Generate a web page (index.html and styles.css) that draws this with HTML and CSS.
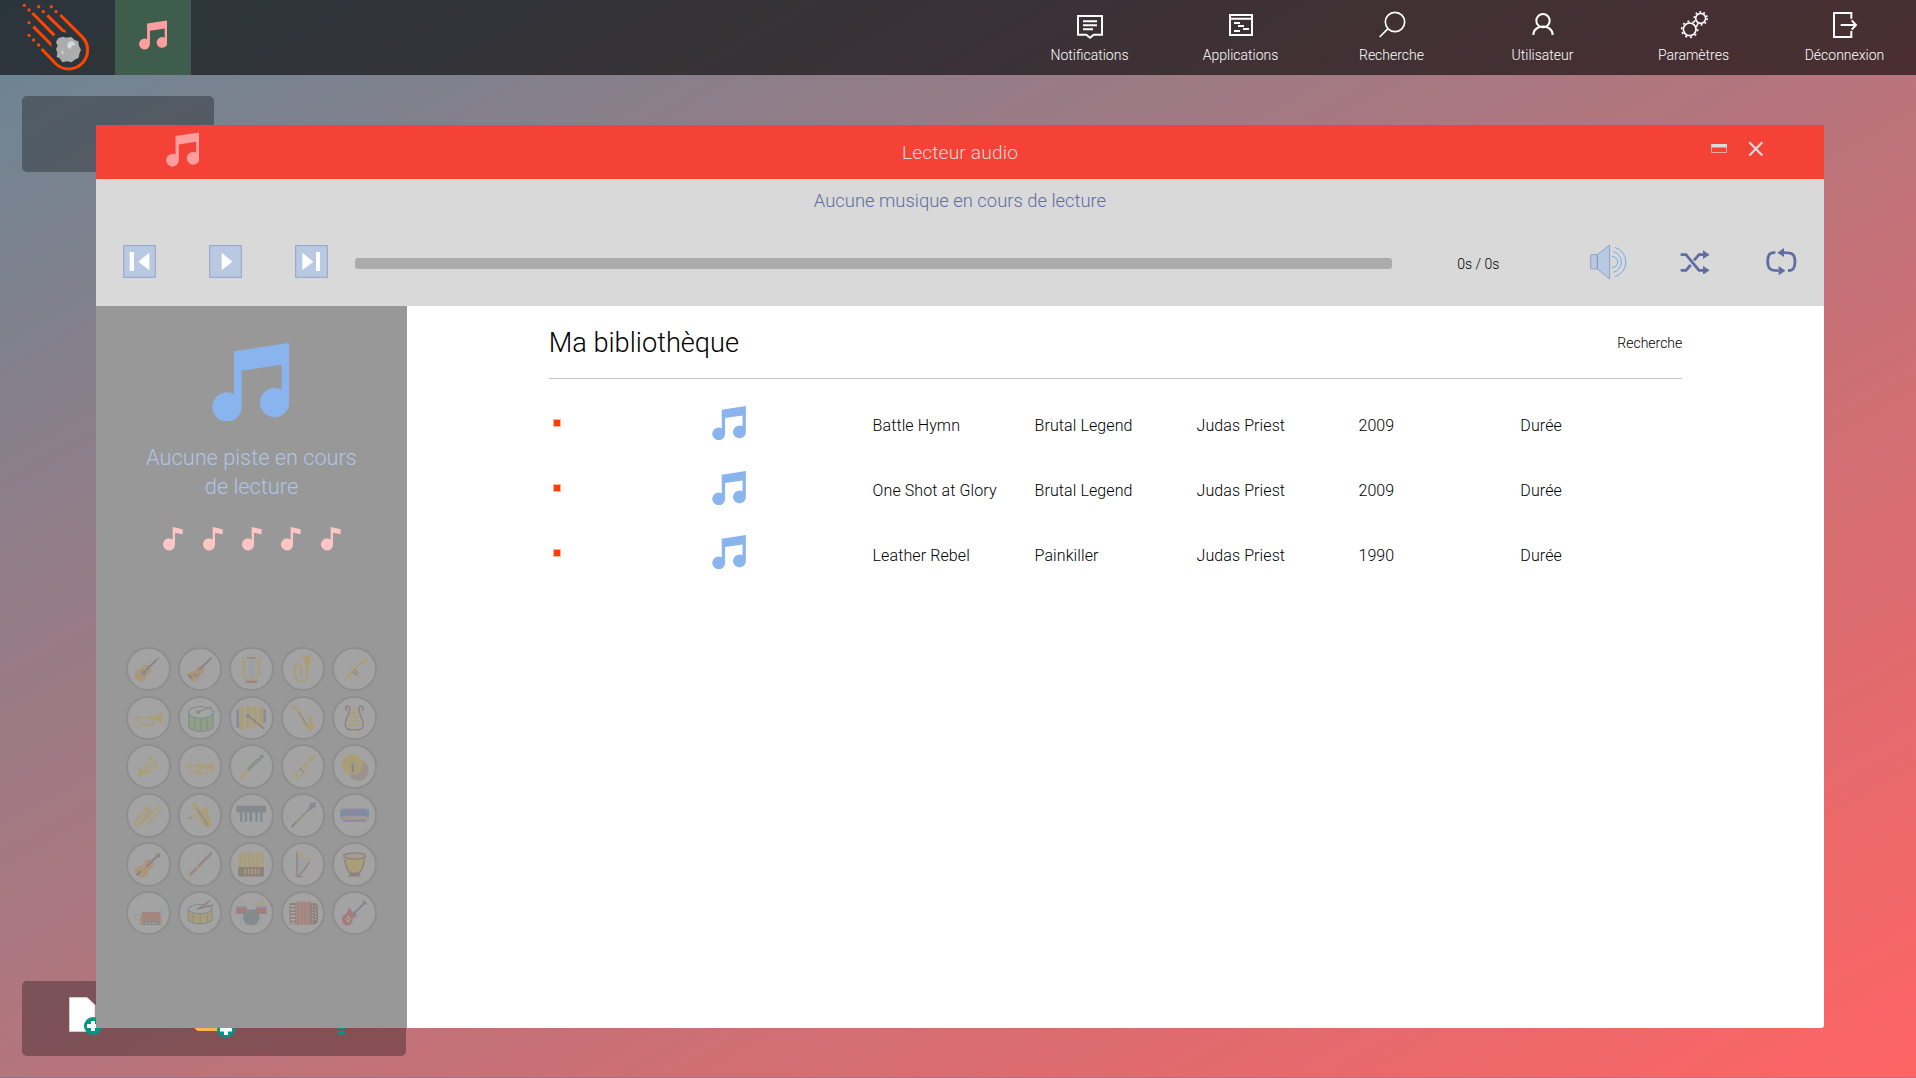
FILE: index.html
```html
<!DOCTYPE html>
<html lang="fr">
<head>
<meta charset="utf-8">
<title>Lecteur audio</title>
<link rel="stylesheet" href="styles.css">
</head>
<body>
<svg class="defs" aria-hidden="true">
  <symbol id="note" viewBox="347 128 232 236"><path d="M413 153L579 128V307A44 44 0 1 1 556 268V193L436 211V320A44 44 0 1 1 413 281Z"/></symbol>
  <symbol id="eighth" viewBox="0 0 60 72"><path d="M29 0L59 7V22L36 17V54A18 18 0 1 1 29 38Z"/></symbol>
</svg>

<header class="topbar">
  <svg class="logo" viewBox="0 0 300 225">
    <g fill="none" stroke="#ff4500" stroke-width="9">
      <path d="M181 45L246 110A56.600 56.600 0 0 1 168 192L125 147"/>
      <path d="M97 39L163 106M100 80L152 132"/>
      <path d="M142 46L190 93"/>
    </g>
    <path fill="#ff4500" d="M185 95L192 87L201 98ZM146 133L152 126L156 142Z"/>
    <g fill="#ff4500"><circle cx="73" cy="16" r="5"/><circle cx="87" cy="30" r="5"/><circle cx="116" cy="20" r="5"/><circle cx="130" cy="35" r="5"/><circle cx="154" cy="20" r="5"/><circle cx="168" cy="35" r="5"/><circle cx="87" cy="68" r="5"/><circle cx="87" cy="106" r="5"/><circle cx="101" cy="120" r="5"/><circle cx="116" cy="135" r="5"/></g>
    <path fill="#acacac" d="M175 114L190 110L198 113L214 111L224 120L235 124L237 138L243 149L238 162L236 173L224 179L215 187L200 184L187 187L179 175L170 171L172 157L168 148L173 137L168 126Z"/>
    <path fill="#d9d9d9" d="M205 144A12 12 0 1 1 226 135C218 134 212 139 211 148ZM191 150A6 6 0 1 0 191 163Q186 157 191 150Z"/>
  </svg>
  <div class="task"><svg class="task-note"><use href="#note"/></svg></div>
  <nav class="menu">
    <a class="menu-item"><svg class="menu-icon" viewBox="0 0 84 84" fill="none" stroke="#fff" stroke-width="6"><path d="M6 15H78V71H53L42 80L31 71H6ZM21 31H63M21 43H63M21 55H51"/></svg>Notifications</a>
    <a class="menu-item"><svg class="menu-icon" viewBox="0 0 84 84" fill="none" stroke="#fff" stroke-width="6"><path d="M9 12H75V72H9ZM9 23H75M21 36H39M33 45H51M48 54H66M21 60H39"/></svg>Applications</a>
    <a class="menu-item"><svg class="menu-icon" viewBox="0 0 84 84" fill="none" stroke="#fff" stroke-width="5"><circle cx="51" cy="33" r="29"/><path d="M30 53L5 78"/></svg>Recherche</a>
    <a class="menu-item"><svg class="menu-icon" viewBox="0 0 84 84" fill="none" stroke="#fff" stroke-width="6"><circle cx="42" cy="29" r="20"/><path d="M13 72C13 38 71 38 71 72"/></svg>Utilisateur</a>
    <a class="menu-item"><svg class="menu-icon" viewBox="0 0 84 84" fill="none" stroke="#fff"><circle cx="29" cy="55" r="19" stroke-width="5"/><circle cx="29" cy="55" r="24" stroke-width="5" stroke-dasharray="6 9.08"/><circle cx="62" cy="22" r="15" stroke-width="5"/><circle cx="62" cy="22" r="19.5" stroke-width="5" stroke-dasharray="5 7.25"/></svg>Paramètres</a>
    <a class="menu-item"><svg class="menu-icon" viewBox="0 0 84 84" fill="none" stroke="#fff" stroke-width="6"><path d="M61 23V6H9V78H61V60M29 42H72M62 28L75 42L62 56"/></svg>Déconnexion</a>
  </nav>
</header>

<main class="desktop">
  <div class="widget"></div>
  <div class="dock">
    <svg viewBox="0 0 384 75">
      <path fill="#fff" stroke="#d9c9cb" d="M47.500 16.500H65L73 24V50.500H47.500Z"/>
      <circle cx="71" cy="45" r="9" fill="#009688"/><path d="M71 40V50M65 45H77" stroke="#fff" stroke-width="4"/>
      <path fill="#ffb74d" d="M172 25H210V50H177Q174 50 172 46Z"/>
      <circle cx="204" cy="48" r="9" fill="#009688"/><path d="M204 42V54M198 48.500H210" stroke="#fff" stroke-width="4"/>
      <path fill="#009688" d="M316 45H323V48H316ZM316 50H323V53.500H316Z"/>
    </svg>
  </div>
</main>

<section class="window">
  <header class="titlebar">
    <svg class="title-note"><use href="#note"/></svg>
    <h1>Lecteur audio</h1>
    <div class="buttons">
      <svg width="16" height="9" viewBox="0 0 16 9"><path fill="none" stroke="#e9aaa6" d="M.5 .5H15.500V8.500H.5Z"/><path fill="#dadada" d="M0 0H16V3.500H0Z"/></svg>
      <svg width="16" height="16" viewBox="0 0 16 16"><path d="M1.300 1.300L14.300 14.500M14.300 1.300L1.300 14.500" stroke="#dadada" stroke-width="2.200"/></svg>
    </div>
  </header>

  <div class="player">
    <p class="now">Aucune musique en cours de lecture</p>
    <div class="controls">
      <svg class="btn" viewBox="0 0 99 99"><rect class="key" x="2" y="2" width="95" height="95"/><path fill="#fff" d="M20 21H33V78H20ZM46 50L79 23V76Z"/></svg>
      <svg class="btn" viewBox="0 0 99 99"><rect class="key" x="2" y="2" width="95" height="95"/><path fill="#fff" d="M38 23L70 50L38 76Z"/></svg>
      <svg class="btn" viewBox="0 0 99 99"><rect class="key" x="2" y="2" width="95" height="95"/><path fill="#fff" d="M22 23L55 50L22 76ZM63 21H75V78H63Z"/></svg>
      <div class="progress"></div>
      <span class="time">0s / 0s</span>
      <svg class="vol" viewBox="0 0 110 108"><path fill="#bac9e2" stroke="#8797bf" stroke-width="2.500" d="M4 32H22V75H4L2 73V34ZM22 32L59 3V105L22 75Z"/><g fill="none" stroke="#72a9ec" stroke-width="3"><path d="M66 37A17 17 0 0 1 66 71M70 23A32 32 0 0 1 70 85M75 10A46 46 0 0 1 75 98"/></g></svg>
      <svg class="shuffle" viewBox="0 0 90 74"><g fill="none" stroke="#5f6da0" stroke-width="8.500"><path d="M2 14H18L57 61H74M2 61H18L32 45M42 31L57 14H74"/></g><path fill="#5f6da0" d="M69 1L89 14L69 27ZM69 48L89 61L69 74Z"/></svg>
      <svg class="repeat" viewBox="0 0 92 82"><g fill="none" stroke="#5f6da0" stroke-width="8.500"><path d="M28 14C12 12 5 20 5 40C5 62 12 68 38 68M66 68C82 68 87 60 87 42C87 18 80 14 52 14"/></g><path fill="#5f6da0" d="M34 14L54 0V27ZM58 68L38 54V82Z"/></svg>
    </div>
  </div>

  <div class="body">
    <aside class="side">
      <svg class="cover"><use href="#note"/></svg>
      <p class="track">Aucune piste en cours<br>de lecture</p>
      <div class="rating"><svg><use href="#eighth"/></svg><svg><use href="#eighth"/></svg><svg><use href="#eighth"/></svg><svg><use href="#eighth"/></svg><svg><use href="#eighth"/></svg></div>
      <div class="instruments">
        <svg viewBox="-59 -59 118 118"><path class="o" d="M-38 12C-36 0 -20 2 -17-5C-12-18 4-14 6-4C14 6 4 14-1 16C-8 22-4 32-18 35C-32 36-42 24-38 12Z"/><circle class="d" cx="-13" cy="11" r="6"/><path class="ld" d="M-11 7L24-27"/><path class="lr" d="M22-25L33-35"/></svg>
        <svg viewBox="-59 -59 118 118"><path class="o" d="M-35 12C-26 2-16 10-12 2C-12-10 6-14 10-4C18 6 6 16-2 16C2 30-14 38-24 34C-38 28-38 18-35 12Z"/><path class="ld" d="M-3 2L33-34M-34 16L-24 26"/><path class="l d1" d="M-20 12L-8 22M-8 18L-2 12"/></svg>
        <svg viewBox="-59 -59 118 118"><path class="ly" stroke-width="6" d="M-20-34C-30-32-26-20-20-24C-16-12-24-2-24 10C-24 34 24 34 24 10C24-2 16-12 20-24C28-20 30-32 20-34"/><path class="lb" d="M-14-33H14"/><path class="ls" d="M-6-30V20M0-30V20M6-30V20"/><path class="r" d="M-17 33H17V40H-17Z"/></svg>
        <svg viewBox="-59 -59 118 118"><path class="y" d="M-12-40H26C18-28 20-20 17-8H7C4-24 2-36-12-40Z"/><path class="ly" stroke-width="6" d="M11-12V22C11 40-24 40-24 18V-4C-24-16-6-16-6-4V18M11-6H22"/></svg>
        <svg viewBox="-59 -59 118 118"><path class="ly" d="M-30 32L22-20M-8 0L14 22M-8 22Q-20 24-10 8L12-6"/><path class="y" d="M20-24Q34-28 36-37L39-22Q28-22 23-16Z"/><path class="l d1" d="M-6 6L8 18M0 0L12 12"/></svg>

        <svg viewBox="-59 -59 118 118"><path class="y" d="M2-8C24-6 34-12 41-20V18C32 10 22 4 2 4Z"/><path class="ly" d="M-42-3H10M-32-2C-32 24-6 20 10 19C22 14 16 2 8 0"/></svg>
        <svg viewBox="-59 -59 118 118"><path class="g" d="M-34-16H38V27Q2 50-34 27Z"/><ellipse class="p" cx="2" cy="-17" rx="36" ry="17"/><path class="l d2" d="M-34-16V27Q2 50 38 27V-16M-16-4V36M2 0V39M20-4V36M-34-17A36 17 0 0 0 38-17A36 17 0 0 0-34-17"/><path class="lr" d="M-5-19L34-34"/><circle class="r" cx="-6" cy="-18" r="6"/></svg>
        <svg viewBox="-59 -59 118 118"><path class="v" d="M-43-27H-36V28H-43ZM35-26H43V10L35 14Z"/><path class="y" d="M-35-34H-21V34H-35ZM-16-34H-2V30H-16ZM3-34H16V26H3ZM21-34H35V22H21Z"/><path class="l brs" d="M-9-7L38 31"/><circle class="d" cx="-10" cy="-7" r="6"/></svg>
        <svg viewBox="-59 -59 118 118"><path class="l ys" stroke-width="8" d="M-36-31L-24-34C-12-30-8-6 8 20C14 36 28 32 28 22"/><path class="y" d="M12-10L28-4L24 2Q24 8 34 18L32 32H12L10 18L19 10Z"/><path class="l d1" d="M-14-18L12 22"/></svg>
        <svg viewBox="-59 -59 118 118"><path class="lb" d="M-21-22C-30-30-22-40-16-34C-8-26-18-12-24 6C-30 28-24 34 0 34C24 34 30 28 24 6C18-12 8-26 16-34C22-40 30-30 23-22"/><path class="ly" d="M-10-28H10M-12-16H12M-16-4H16M-20 8H20M-20 20H20"/></svg>

        <svg viewBox="-59 -59 118 118"><path class="ly" d="M-4-18C18-28 30-6 20 8C10 20-14 16-10-2C-6-14 12-12 12-2C10 8-2 6 0-2M2-32L10-20M-12 10Q-4 18 8 16"/><path class="y" d="M-30 3L-10 14L2 18Q-22 22-28 37Z"/></svg>
        <svg viewBox="-59 -59 118 118"><path class="ly" d="M-40-2H34M-28 0C-28 24-10 21 6 21C26 21 24 4 12 0"/><path class="y" d="M10-6Q30-4 40-14V18Q28 6 10 6Z"/><path class="ly" d="M-12-8V22M-4-8V22M4-8V22"/></svg>
        <svg viewBox="-59 -59 118 118"><path class="l ys" stroke-width="9" d="M-32 34L-6 8"/><path class="l d2" stroke-width="9" d="M-10 10L35-32"/><path class="l ys" stroke-dasharray="5 5" d="M-6 6L31-28"/></svg>
        <svg viewBox="-59 -59 118 118"><path class="ly" d="M-34 34L24-24M-18 16C-24 32-10 36-4 26L10 12C16 2 6-2 0 2"/><path class="y" d="M16-22Q28-24 34-38L38-28Q24-16 20-14Z"/><path class="l d1" d="M-10 6L2 18"/></svg>
        <svg viewBox="-59 -59 118 118"><circle class="br" opacity=".5" cx="12" cy="12" r="30"/><circle class="y" cx="-5" cy="-5" r="31"/><circle class="g" opacity=".5" cx="-5" cy="-5" r="12"/><path class="ld" d="M-5-6V18"/></svg>

        <svg viewBox="-59 -59 118 118"><path class="ly" d="M-40 20L-8-14M-40 20C-40 36-30 30-24 26L28-24C40-28 40-18 34-14L-4 26M-30 24L6-10M-12-2L4 14"/><path class="y" d="M-12-12L-6-31L12-11L-2-7Z"/></svg>
        <svg viewBox="-59 -59 118 118"><path class="l ys" stroke-width="8" d="M-22-28Q-18-40-12-30L10 22"/><path class="y" d="M-15-33L8-5L6-24H24L22-10L33 24Q34 38 20 35L8 28L-20-24Z"/><path class="ly" d="M-18 10Q-12-10-22 3L-30 8"/><path class="l d1" d="M-34 10L-26 6M-10-18L22 28"/></svg>
        <svg viewBox="-59 -59 118 118"><path class="p" d="M-43-20H43V27H-43Z"/><path class="d" d="M-43-28H43V-8H-43ZM-33-8H-26V19H-33ZM-19-8H-12V19H-19ZM-5-8H3V19H-5ZM12-8H19V19H12ZM26-8H33V19H26Z"/></svg>
        <svg viewBox="-59 -59 118 118"><path class="ld" d="M-34 34L26-26M22-36L36-24"/><path class="d" d="M15-27L33-39L37-32L24-15Z"/><path class="l ys" stroke-dasharray="6 4" d="M-20 20L14-14"/></svg>
        <svg viewBox="-59 -59 118 118"><path class="y" d="M-41 6H43V15H-41Z"/><path class="v" d="M-33-20H35V4H-33ZM-33 14H35V19H-33Z"/><path fill="#7791a1" d="M-41-17H-33V5H-41ZM35-17H43V5H35Z"/><path class="l d1" stroke-dasharray="3 4" d="M-38 10H40"/></svg>

        <svg viewBox="-59 -59 118 118"><path class="o" d="M-38 14C-30 0-18 8-13 0C-12-16 6-18 10-10C24-2 16 8 4 14C0 20 4 26-6 34C-16 44-26 36-28 34C-38 30-42 22-38 14Z"/><path class="ld" d="M-6 8L28-26M-34 32L-22 20"/><path class="l brs" d="M22-30L34-22M30-20L34-34"/></svg>
        <svg viewBox="-59 -59 118 118"><path class="lr" stroke-width="8" d="M-33 34L34-34"/><path class="l ys" stroke-width="8" d="M-34 35L-28 29M-12 12L-6 6"/><path class="l d1" stroke-dasharray="3 8" d="M0 0L30-30"/></svg>
        <svg viewBox="-59 -59 118 118"><path class="y" d="M-36-34H-26V8H-36ZM-23-34H-14V8H-23ZM-11-34H-2V8H-11ZM1-34H10V8H1ZM13-34H23V8H13ZM26-34H36V8H26Z"/><path class="br" d="M-38 8H37V36H-38Z"/><path class="l ys" stroke-dasharray="5 5" stroke-width="16" d="M-20 21H24"/><path class="l d1" d="M-32 14V32M-36 23H-24M30 14V32"/></svg>
        <svg viewBox="-59 -59 118 118"><path fill="#9ba0a4" d="M-17-24L-8-18L12 0L-14 28Z"/><path class="lb" d="M-18-36V36H-2M-14 34Q4 18 18-6"/><path class="ly" d="M-20-36C-4-38-6-18 4-16C14-10 22-24 18-10"/></svg>
        <svg viewBox="-59 -59 118 118"><path class="y" d="M-32-16H34Q32 12 12 22H-10Q-28 12-32-16Z"/><ellipse cx="1" cy="-24" rx="32" ry="9" fill="#a59b95" stroke="#8f837b" stroke-width="4"/><path class="lb" d="M-28-14Q-24 14-10 30L-16 36M30-14Q26 14 12 30L18 36M-10 20V32M12 20V32"/><path class="br" d="M-12 24H14V36H-12Z"/></svg>

        <svg viewBox="-59 -59 118 118"><path class="r2" d="M-18-4H34L40 34H-25Z"/><path class="o" d="M-26 20L-16 22V34H-26ZM34 22H40V34H34Z"/><path class="ls" d="M38-28V12"/><path class="l gs" d="M-22 6Q-38 0-40 10Q-40 20-22 16"/><path class="d" d="M-15 23H32V34H-15Z"/><path class="l ws" stroke-dasharray="5 5" d="M-9 29H28"/></svg>
        <svg viewBox="-59 -59 118 118"><path class="y" d="M-36-10H34V22Q0 42-36 22Z"/><ellipse class="p" cx="0" cy="-12" rx="34" ry="13"/><path class="l d2" d="M-35-10V22Q0 40 34 22V-10M-35-12A34 13 0 0 0 34-12A34 13 0 0 0-35-12M-20 2V30M0 4V33M20 2V30"/><path class="lb" d="M-10-10L28-36M0-14L38-24"/></svg>
        <svg viewBox="-59 -59 118 118"><path class="ls" d="M-31 8V34M29 8V34M-28-34V-20M28-34V-20"/><path class="l ys" d="M-36-30L-18-34M18-33H40M18-26H38"/><path class="rr" d="M-44-16H-12V1H-44ZM13-16H44V1H13Z"/><path class="l d2" d="M-46-18H-12M12-18H46M-46 1H-12M12 1H46"/><circle class="d" cx="0" cy="12" r="24"/></svg>
        <svg viewBox="-59 -59 118 118"><path class="br" d="M-40-30H-20V32H-40ZM20-30H36L43-22V24L36 32H20Z"/><path class="l ws" stroke-width="14" stroke-dasharray="5 5" d="M-30-24V30"/><path class="r2" d="M-20-35H-11V35H-20ZM-8-34H-1V34H-8ZM2-34H9V34H2ZM12-35H20V35H12Z"/><path class="rr" opacity=".6" d="M-11-32H-8V32H-11ZM-1-32H2V32H-1ZM9-32H12V32H9Z"/><path class="l ws" stroke-dasharray="4 5" d="M27-22V26M36-20V24"/></svg>
        <svg viewBox="-59 -59 118 118"><path class="rr" d="M-34 8C-24 2-20-2-18-14Q-10-16-6-4L10 6Q4 12-4 14C-4 28-10 38-22 36C-36 34-38 18-34 8Z"/><path class="ld" d="M-4 4L30-30M26-36L36-26"/><path class="l ws" d="M-20 8L-10 18M-24 16L-14 26"/></svg>
      </div>
    </aside>

    <div class="library">
      <div class="library-head"><h2>Ma bibliothèque</h2><span>Recherche</span></div>
      <ul class="tracks">
        <li><i></i><svg><use href="#note"/></svg><span>Battle Hymn</span><span>Brutal Legend</span><span>Judas Priest</span><span>2009</span><span>Durée</span></li>
        <li><i></i><svg><use href="#note"/></svg><span>One Shot at Glory</span><span>Brutal Legend</span><span>Judas Priest</span><span>2009</span><span>Durée</span></li>
        <li><i></i><svg><use href="#note"/></svg><span>Leather Rebel</span><span>Painkiller</span><span>Judas Priest</span><span>1990</span><span>Durée</span></li>
      </ul>
    </div>
  </div>
</section>
</body>
</html>
```
FILE: styles.css
```css
* { box-sizing: border-box; }
html { background: linear-gradient(to bottom right, #698695, #ff6464) 0 0 / 100% 1077px; }
body { margin: 0; height: 1077px; overflow: hidden; position: relative; font-family: Roboto, "Liberation Sans", sans-serif; font-weight: 300; color: #000; }
h1, h2, p, ul { margin: 0; padding: 0; font-weight: 300; list-style: none; }
svg { display: block; }
.defs { position: absolute; width: 0; height: 0; }

.topbar { display: flex; height: 75px; background: rgba(0, 0, 0, .6); }
.logo { width: 100px; height: 75px; margin-right: 15px; }
.task { width: 76px; height: 75px; background: #3e5d4d; padding: 20px 0 0 23.5px; }
.task-note { width: 28.500px; height: 30px; fill: #ff9e9e; }
.menu { display: grid; grid-template-columns: repeat(6, 151px); margin-left: auto; margin-right: -4px; }
.menu-item { display: flex; flex-direction: column; align-items: center; padding-top: 11px; font-size: 14px; line-height: 16px; color: #fff; }
.menu-icon { width: 28px; height: 28px; margin-bottom: 8px; }

.widget { position: absolute; left: 22px; top: 96px; width: 192px; height: 76px; border-radius: 5px; background: rgba(0, 0, 0, .3); }
.dock { position: absolute; left: 22px; top: 981px; width: 384px; height: 75px; border-radius: 5px; background: rgba(0, 0, 0, .3); }

.window { position: absolute; left: 96px; top: 125px; width: 1728px; height: 903px; display: flex; flex-direction: column; }
.titlebar { display: grid; grid-template-columns: 173px 1fr 173px; height: 54px; background: #f44336; }
.title-note { width: 33.500px; height: 35px; margin: 6.500px 0 0 69.500px; fill: #ff9e9e; }
.titlebar h1 { padding-top: 1px; font-size: 19.200px; letter-spacing: .15px; line-height: 54px; text-align: center; color: #dadada; }
.buttons { display: flex; gap: 21px; align-items: center; height: 47px; padding-left: 60px; }

.player { height: 127px; background: #d9d9d9; }
.now { padding-top: 10px; font-size: 18.400px; line-height: 24px; text-align: center; color: #5f6da0; }
.controls { display: grid; grid-template-columns: repeat(3, 1fr) 12fr 2fr repeat(3, 1fr); align-items: center; justify-items: center; height: 97px; }
.btn { width: 33px; height: 33px; }
.key { fill: #bac9e2; stroke: #9aa8cb; stroke-width: 3.500; }
.progress { width: 100%; height: 11px; margin-top: 4px; border-radius: 3px; background: #acacac; }
.time { font-size: 14px; padding-top: 5px; }
.vol { width: 36.700px; height: 36px; margin: 1px 0 0 1px; }
.shuffle { width: 30px; height: 24.700px; margin: 1px 0 0 1px; }
.repeat { width: 30.700px; height: 27.300px; margin: 1px 0 0 1px; }

.body { display: flex; flex: 1; background: #fff; border-bottom-right-radius: 3px; }
.side { width: 311px; background: #989898; display: flex; flex-direction: column; align-items: center; }
.cover { width: 77.300px; height: 78.700px; margin: 36.700px 2.500px 0 0; fill: #8ab4ee; }
.track { margin-top: 22px; font-size: 21.750px; line-height: 29px; text-align: center; color: #b0c4e4; }
.rating { display: flex; gap: 19.300px; margin: 26px 0 0 1px; fill: #ffc5c5; }
.rating svg { width: 20px; height: 24px; }

.instruments { display: grid; grid-template-columns: repeat(5, 51.500px); grid-auto-rows: 48.800px; margin-top: 95.500px; justify-items: center; }
.instruments svg { width: 44.500px; height: 44.500px; border: 2.700px solid #8e8e8e; border-radius: 50%; background: #a3a3a3; }
.y { fill: #aa9e79; } .o { fill: #ab967b; } .d { fill: #848a8e; } .br { fill: #8f817c; } .g { fill: #8fa085; } .v { fill: #8789a0; } .p { fill: #a0a5a6; } .r { fill: #9c857e; } .r2 { fill: #a4867e; } .rr { fill: #a67d7c; }
.l, .ly, .ld, .lb, .lr, .ls { fill: none; stroke-width: 4; }
.ly { stroke: #aa9e79; stroke-width: 4.500; } .ld { stroke: #838489; stroke-width: 5.500; } .lb { stroke: #8f817e; } .lr { stroke: #9a8885; } .ls { stroke: #959da5; stroke-width: 3; }
.d1 { stroke: #85868a; stroke-width: 3; } .d2 { stroke: #828d91; stroke-width: 3; } .ys { stroke: #aa9e79; } .brs { stroke: #8b7f80; } .gs { stroke: #939e99; } .ws { stroke: #a9a9a5; }
.ly[stroke-width="6"] { stroke-width: 6; }
[stroke-width="8"] { stroke-width: 8; }
.l[stroke-width="9"] { stroke-width: 9; }
.l[stroke-width="14"] { stroke-width: 14; }
.l[stroke-width="16"] { stroke-width: 16; }

.library { flex: 1; padding: 0 141.700px; }
.library-head { display: flex; justify-content: space-between; align-items: center; height: 73px; padding-top: 2px; border-bottom: 1px solid #c4c4c4; }
.library-head h2 { font-size: 27.200px; }
.library-head span { font-size: 14px; }
.tracks { padding-top: 14.300px; }
.tracks li { display: grid; grid-template-columns: repeat(7, 1fr); align-items: center; height: 64.700px; font-size: 16px; letter-spacing: .1px; }
.tracks i { width: 8px; height: 8px; margin: 0 0 5px 4px; background: #ff3d00; border: 1px solid #ffb39c; }
.tracks svg { width: 34px; height: 34.300px; margin: 0 0 5px 1.500px; fill: #8ab4ee; }
```
